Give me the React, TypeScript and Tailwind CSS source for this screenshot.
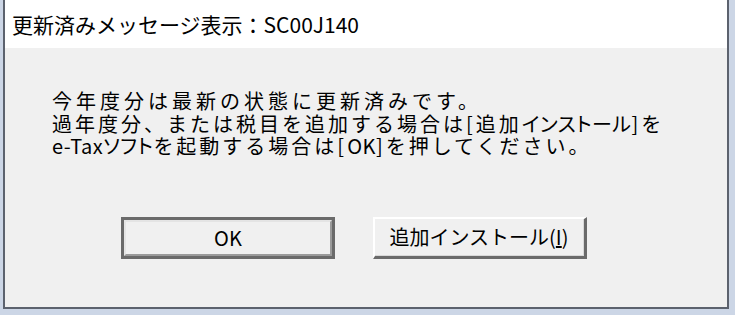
const jp = "font-['Noto_Sans_CJK_JP','Noto_Sans_CJK_SC',sans-serif]";

// katakana and latin runs are narrower in the original dialog font
function Kana({ children }: { children: React.ReactNode }) {
  return <span className="tracking-[0.5px] [font-feature-settings:'palt']">{children}</span>;
}

function Latin({ children }: { children: React.ReactNode }) {
  return <span className="tracking-[0.5px]">{children}</span>;
}

function DialogButton({
  label,
  isDefault,
}: {
  label: React.ReactNode;
  isDefault?: boolean;
}) {
  if (isDefault) {
    return (
      <div className="h-[42px] w-[214px] border-[3px] border-[#6a6a6a]">
        <div className="flex h-full items-center justify-center border-2 border-t-[#e4e4e4] border-l-[#e4e4e4] border-r-[#9a9a9a] border-b-[#9a9a9a] bg-[#f0f0f0] text-[20px] text-black">
          {label}
        </div>
      </div>
    );
  }
  return (
    <div className="h-[42px] w-[214px] border-2 border-t-white border-l-white border-r-[#6a6a6a] border-b-[#6a6a6a] border-r-[3px] border-b-[3px]">
      <div className="flex h-full items-center justify-center border-r border-b border-[#d8d8d8] bg-[#f0f0f0] text-[20px] text-black">
        {label}
      </div>
    </div>
  );
}

export default function App() {
  return (
    <div className={`flex h-[315px] w-[735px] bg-[#ccd6e6] pl-[3px] pr-[6px] pb-[6px] ${jp}`}>
      <div className="flex flex-1 flex-col border-x-2 border-b-2 border-[#5c626e]">
        <div className="flex h-[48px] items-center bg-white pl-[7px] text-[21px] leading-none text-black">
          更新済みメッセージ表示：SC00J140
        </div>
        <div className="flex flex-1 flex-col bg-[#f0f0f0] pl-[47px] pt-[42px]">
          <div className="whitespace-nowrap text-[20px] leading-[22.5px] tracking-[3px] text-black">
            <div className="tracking-[4px]">今年度分は最新の状態に更新済みです。</div>
            <div>
              過年度分、または税目を追加する場合は[追加<Kana>インストール</Kana>]を
            </div>
            <div>
              <Latin>e-Tax</Latin>
              <Kana>ソフト</Kana>を起動する場合は[<Latin>OK</Latin>]を押してください。
            </div>
          </div>
          <div className="mt-[59px] flex gap-[38px] pl-[69px]">
            <DialogButton isDefault label="OK" />
            <DialogButton
              label={
                <span>
                  追加インストール(<span className="underline">I</span>)
                </span>
              }
            />
          </div>
        </div>
      </div>
    </div>
  );
}
